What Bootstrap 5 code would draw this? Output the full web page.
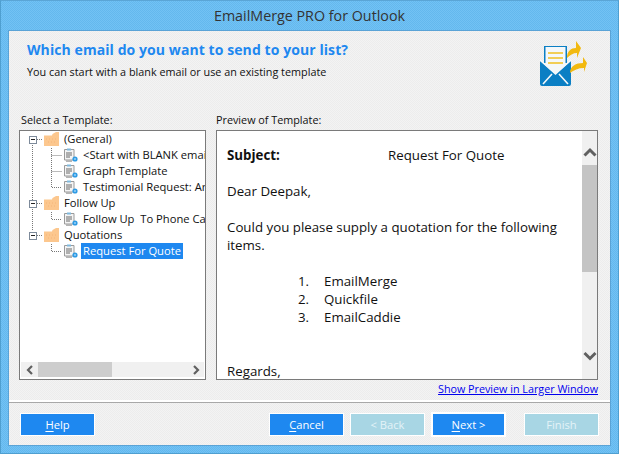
<!DOCTYPE html>
<html lang="en">
<head>
<meta charset="utf-8">
<title>EmailMerge PRO for Outlook</title>
<link href="https://cdn.jsdelivr.net/npm/bootstrap@5.3.0/dist/css/bootstrap.min.css" rel="stylesheet">
<style>
html,body{margin:0;height:454px;overflow:hidden}
body{background:#6bbdf0;font-family:"Open Sans","Noto Sans",sans-serif;color:#111}
.win{width:619px;height:454px;border:1px solid #4f9fd0;border-top-color:#5aa5d6;background:repeating-conic-gradient(#73c2f4 0 25%,#63b8ee 0 50%) 0 0/2px 2px}
.titlebar{height:29px;font-size:14.3px;line-height:30px;color:#333}
.client{margin:0 7px 7px 7px;height:416px;background:repeating-conic-gradient(#f3f3f3 0 25%,#ececec 0 50%) 0 0/2px 2px;border:1px solid #5aa3d6}
.head-area{height:82px;padding:9px 0 0 18px}
.q-title{font-size:14px;line-height:19px;font-weight:700;color:#1e88f0;letter-spacing:.08px}
.q-sub{font-size:10.82px;line-height:16px;margin-top:5px;color:#111}
.logo-box{width:48px;padding-top:1px;margin-right:23px}
.logo-box svg{display:block;overflow:visible}
.panels{height:287px;padding:0 12px 0 10px;gap:10px}
.lbl{font-size:10.8px;line-height:14px;height:17px;color:#111}
.lbl-l{padding-left:2px}
.pane-l{width:187px}
.pane-r{width:382px}
.frame{height:250px;background:#fff;border:1px solid #7a7a7a;overflow:hidden}
.treebox{position:relative;flex:1 1 auto;overflow:hidden}
.lines{position:absolute;left:0;top:0}
.t-row{height:16px;font-size:11.2px;line-height:16px;white-space:nowrap;color:#111;position:relative}
.t-row svg{flex:none}
.lvl1{padding-left:24px}
.lvl2{padding-left:43px}
.t-txt{padding:0 2px;margin-left:3px}
.t-txt-f{margin-left:5px}
.t-sel{background:#1e88f0;color:#fff}
.hbar{height:15px;background:#f0f0f0;margin:0 1px 2px 1px;flex:none}
.hthumb{width:74px;height:15px;background:#cdcdcd}
.arr{width:17px;flex:none}
.arr svg{display:block;margin:0 auto}
.preview{flex:1 1 auto;font-size:13.3px;line-height:18px;padding:15px 0 0 10px;overflow:hidden;color:#111}
.preview p{margin:0 0 18px}
.pv-subjrow{margin-bottom:18px}
.pv-subj{width:161px;font-weight:700}
.pv-list{margin:0 0 18px;padding:0;list-style:none}
.pv-list li{display:flex}
.pv-n{width:26px;margin-left:71px}
.preview .pv-reg{padding-top:18px;margin:0}
.vbar{width:15px;background:#f0f0f0;margin-right:0;flex:none}
.vbar svg{display:block;margin:0 auto}
.vthumb{height:107px;background:#c4c4c4}
.link-row{height:20px;text-align:right;font-size:10.75px;line-height:18px}
.link-row a{color:#0000ee}
.sep{border-top:2px solid #fff;border-bottom:1px solid #a8a8a8;height:3px}
.foot{padding:11px 12px 0 12px}
.wbtn{width:73px;height:21px;padding:0;border:0;border-radius:0;background:#1e88f0;color:#fff;font-size:11.2px;line-height:21px;text-align:center;outline:1px solid #fff}
.wbtn-off{background:#a8d6e4;color:#e4f3f7}
.wbtn-next{width:71px;outline-width:2px}
.gap-a{margin-left:8px}
.gap-b{margin-left:9px}
.gap-c{margin-left:21px}
.wbtn u{text-underline-offset:2px}
</style>
</head>
<body>
<svg width="0" height="0" class="d-block" aria-hidden="true">
<defs>
<symbol id="fold" viewBox="0 0 15 14"><path d="M0 3.5 L8 3.5 L8.5 2 L12 0 L15 0 L15 14 L0 14Z" fill="#fcc78e"/><path d="M2 7h1M5 7h1M8 7h1M11 7h1M4 10h1M7 10h1M10 10h1" stroke="#f4b478"/></symbol>
<symbol id="doc" viewBox="0 0 15 15"><path d="M1.5 1.5H11V12H1.5Z" fill="#f4f4f4" stroke="#9a9a9a"/><path d="M3 14V12H9V14Z" fill="#b5b5b5"/><path d="M4 .5H8V2.5H4Z" fill="#7fb8dc"/><path d="M3 5h6M3 7h6M3 9h4" stroke="#6a6a6a"/><circle cx="12" cy="11" r="2.6" fill="#2e9be4"/><path d="M11 11h2" stroke="#cfeaff"/></symbol>
</defs>
</svg>
<div class="win d-flex flex-column">
  <div class="titlebar text-center">EmailMerge PRO for Outlook</div>
  <div class="client d-flex flex-column">
    <div class="head-area d-flex justify-content-between">
      <div>
        <div class="q-title">Which email do you want to send to your list?</div>
        <div class="q-sub">You can start with a blank email or use an existing template</div>
      </div>
      <div class="logo-box">
        <svg width="48" height="46" viewBox="0 0 48 46">
          <path d="M5 5H28V22H5Z" fill="#0b7fc4"/>
          <path d="M6.5 6H26.5V29L16.5 34L6.5 29Z" fill="#f4f8fa"/>
          <path d="M9 12H24M9 17H24M9 22H24" stroke="#f0c020" stroke-width="1.6"/>
          <path d="M1 20L16.5 33L32 20V43a2 2 0 0 1-2 2H3a2 2 0 0 1-2-2Z" fill="#0b7fc4"/>
          <path d="M1 19L16.5 33L32 19M4 43L13 33M29 43L20 33" stroke="#f4f8fa" stroke-width="1.6" fill="none"/>
          <path d="M28 17C28 10 32 7 37 7V0L42 7L38 17V12C34 12 31 14 28 17Z" fill="#f2b90f"/>
          <path d="M31 32C31 25 37 22 44 22V16L48 22L45 31V27C39 27 35 29 31 32Z" fill="#f2b90f"/>
        </svg>
      </div>
    </div>
    <div class="panels d-flex">
      <div class="pane-l d-flex flex-column">
        <div class="lbl lbl-l">Select a Template:</div>
        <div class="frame d-flex flex-column">
          <div class="treebox">
            <svg class="lines" width="185" height="130" viewBox="0 0 185 130">
              <g stroke="#777" stroke-dasharray="1 1" fill="none">
                <path d="M12.5 12V100"/>
                <path d="M17 8.5H23M17 72.5H23M17 104.5H23"/>
                <path d="M31.5 17V56.5H42M31.5 24.5H42M31.5 40.5H42"/>
                <path d="M31.5 81V88.5H42"/>
                <path d="M31.5 113V120.5H42"/>
              </g>
              <g fill="#fff" stroke="#7d8a9a">
                <rect x="9.5" y="5.5" width="7" height="7"/>
                <rect x="9.5" y="69.5" width="7" height="7"/>
                <rect x="9.5" y="101.5" width="7" height="7"/>
              </g>
              <path d="M11 8.5H15M11 72.5H15M11 104.5H15" stroke="#222"/>
            </svg>
            <div class="t-row lvl1 d-flex align-items-center"><svg width="15" height="14"><use href="#fold"/></svg><span class="t-txt-f">(General)</span></div>
            <div class="t-row lvl2 d-flex align-items-center"><svg width="15" height="15"><use href="#doc"/></svg><span class="t-txt">&lt;Start with BLANK emai</span></div>
            <div class="t-row lvl2 d-flex align-items-center"><svg width="15" height="15"><use href="#doc"/></svg><span class="t-txt">Graph Template</span></div>
            <div class="t-row lvl2 d-flex align-items-center"><svg width="15" height="15"><use href="#doc"/></svg><span class="t-txt">Testimonial Request: Ar</span></div>
            <div class="t-row lvl1 d-flex align-items-center"><svg width="15" height="14"><use href="#fold"/></svg><span class="t-txt-f">Follow Up</span></div>
            <div class="t-row lvl2 d-flex align-items-center"><svg width="15" height="15"><use href="#doc"/></svg><span class="t-txt">Follow Up&nbsp; To Phone Ca</span></div>
            <div class="t-row lvl1 d-flex align-items-center"><svg width="15" height="14"><use href="#fold"/></svg><span class="t-txt-f">Quotations</span></div>
            <div class="t-row lvl2 d-flex align-items-center"><svg width="15" height="15"><use href="#doc"/></svg><span class="t-txt t-sel">Request For Quote</span></div>
          </div>
          <div class="hbar d-flex align-items-center">
            <div class="arr"><svg width="8" height="10" viewBox="0 0 8 10"><path d="M6 1L2 5L6 9" fill="none" stroke="#606060" stroke-width="2.2"/></svg></div>
            <div class="hthumb"></div>
            <div class="flex-grow-1"></div>
            <div class="arr"><svg width="8" height="10" viewBox="0 0 8 10"><path d="M2 1L6 5L2 9" fill="none" stroke="#606060" stroke-width="2.2"/></svg></div>
          </div>
        </div>
      </div>
      <div class="pane-r d-flex flex-column">
        <div class="lbl">Preview of Template:</div>
        <div class="frame d-flex">
          <div class="preview">
            <div class="d-flex pv-subjrow"><div class="pv-subj">Subject:</div><div>Request For Quote</div></div>
            <p>Dear Deepak,</p>
            <p>Could you please supply a quotation for the following<br>items.</p>
            <ul class="pv-list">
              <li><span class="pv-n">1.</span><span>EmailMerge</span></li>
              <li><span class="pv-n">2.</span><span>Quickfile</span></li>
              <li><span class="pv-n">3.</span><span>EmailCaddie</span></li>
            </ul>
            <p class="pv-reg">Regards,</p>
          </div>
          <div class="vbar d-flex flex-column">
            <svg width="14" height="34" viewBox="0 0 14 34"><path d="M1.5 24.5L7 19L12.5 24.5" fill="none" stroke="#606060" stroke-width="3"/></svg>
            <div class="vthumb"></div>
            <div class="flex-grow-1"></div>
            <svg width="14" height="29" viewBox="0 0 14 29"><path d="M1.5 3L7 8.5L12.5 3" fill="none" stroke="#606060" stroke-width="3"/></svg>
          </div>
        </div>
        <div class="link-row"><a href="#">Show Preview in Larger Window</a></div>
      </div>
    </div>
    <div class="sep"></div>
    <div class="foot d-flex">
      <button class="btn wbtn" type="button"><u>H</u>elp</button>
      <div class="flex-grow-1"></div>
      <button class="btn wbtn" type="button"><u>C</u>ancel</button>
      <button class="btn wbtn wbtn-off gap-a" type="button">&lt; Back</button>
      <button class="btn wbtn wbtn-next gap-b" type="button"><u>N</u>ext &gt;</button>
      <button class="btn wbtn wbtn-off gap-c" type="button">Finish</button>
    </div>
  </div>
</div>
</body>
</html>
